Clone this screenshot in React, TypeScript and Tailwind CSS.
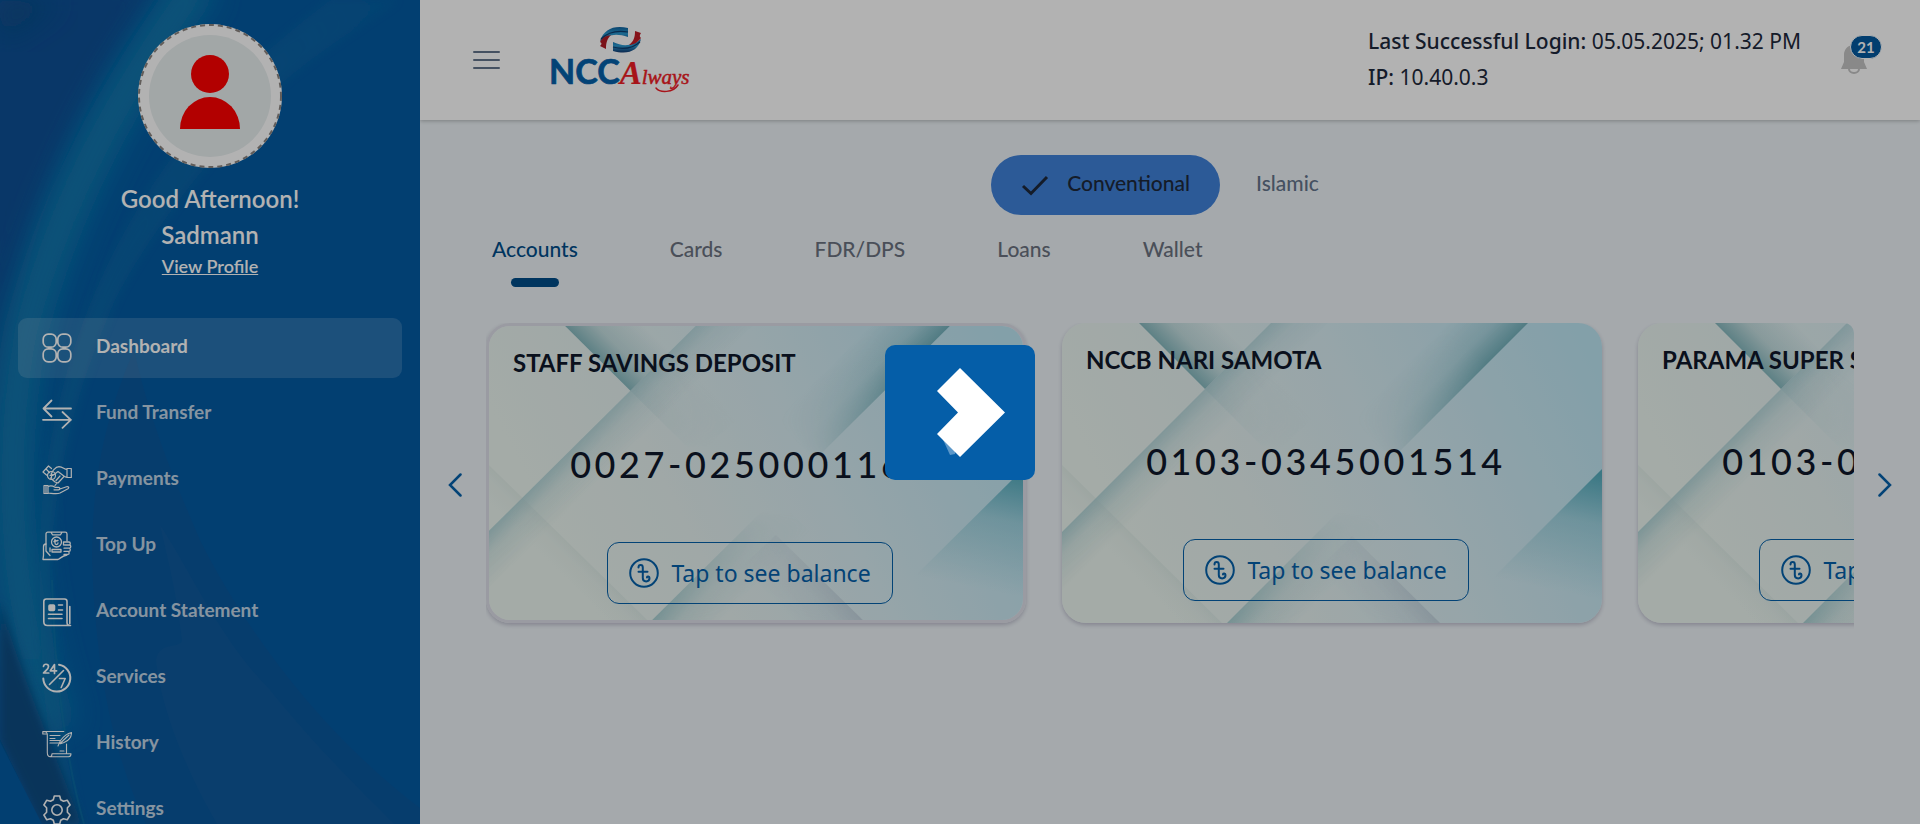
import React from "react";

const menu = [
  { label: "Dashboard", icon: "dashboard", active: true },
  { label: "Fund Transfer", icon: "transfer" },
  { label: "Payments", icon: "payments" },
  { label: "Top Up", icon: "topup" },
  { label: "Account Statement", icon: "statement" },
  { label: "Services", icon: "services" },
  { label: "History", icon: "history" },
  { label: "Settings", icon: "settings" },
];

const accounts = [
  { name: "STAFF SAVINGS DEPOSIT", number: "0027-0250001164", selected: true },
  { name: "NCCB NARI SAMOTA", number: "0103-0345001514" },
  { name: "PARAMA SUPER SAVINGS", number: "0103-0345001523" },
];

const tabs = ["Accounts", "Cards", "FDR/DPS", "Loans", "Wallet"];

const iconShapes: Record<string, React.ReactNode> = {
  dashboard: (
    <g strokeWidth="1.7">
      <rect x="1.2" y="1.2" width="13" height="13" rx="5" />
      <rect x="15.8" y="1.2" width="13" height="13" rx="5" />
      <rect x="1.2" y="15.8" width="13" height="13" rx="5" />
      <rect x="15.8" y="15.8" width="13" height="13" rx="5" />
    </g>
  ),
  transfer: (
    <g strokeWidth="1.8">
      <path d="M29 9.5H1.5M9.5 1.5l-8 8 8 8" />
      <path d="M1 20.8h28M20.5 13l8.3 7.8-8.3 8" />
    </g>
  ),
  payments: (
    <g strokeWidth="1.2">
      <path d="M25 3.5h4.3v9H25zM25 4.5c-3-.3-4-2.6-8-2.8-3 0-4 1.8-6 4l-2 3.500c1.500 1 3.500.5 5-1.200l2-1.500 6.500 5c1 .8 2.500.5 2.500.5" />
      <path d="M22 11.500l-6 6.500-3-1-4.500-4M18 11l-4 4.500M1 7l5.500-6 3 2.500M1 7l3.500 3M4.500 4.500l3 3M15 18l-2 2.500" />
      <circle cx="9.500" cy="10.500" r="4" />
      <path d="M9.500 8.500v4M8 10.500h3" />
      <path d="M2 20.500h4v8H2zM6 21.500c3-1.200 5-.5 7 .8h3.500c1.800 0 1.800 2.500 0 2.500H12M18 24l6.500-2.300c2-.6 3 1 1.500 2l-8 4.300c-3 1.500-7 .5-12 0M4 20.500v8" />
    </g>
  ),
  topup: (
    <g strokeWidth="1.3">
      <path d="M4 13V3c0-1 .8-1.800 1.800-1.800h17.400c1 0 1.800.8 1.800 1.800v7M9 1.200l1.500 2.600h8L20 1.200" />
      <circle cx="14.500" cy="11" r="5" />
      <path d="M13 8.500v3.500c0 2 3 2 3 0M12 10.500l4-1M10 18.500h9v2.500h-9z" />
      <path d="M4 13c-2 0-2.500 1-2.500 3v8c0 2-.5 3-.5 4.500h15c3-1.500 4-3.500 9-4.500M4 13v7l4 4.500M8 20.500V17" />
      <path d="M21.500 11h5.500c1.700 0 1.700 3 0 3h-4.500M27 14h.5c1.700 0 1.700 3.200 0 3.200H22M27 17.200c1.700 0 1.700 3.200 0 3.200h-5M26 20.400c1.500 0 1.500 3 0 3h-4M21.500 11v3" />
    </g>
  ),
  statement: (
    <g strokeWidth="1.6">
      <path d="M28.500 28.500H5.500c-2.200 0-3.700-1.500-3.700-3.700V4.500c0-1.500 1-2.500 2.500-2.500h18.200c1.500 0 2.500 1 2.500 2.500v21c0 2 1.500 3 3.500 3M27.800 9.500v17" />
      <path d="M16.500 8h4M16.500 13h4M6.500 17.300h13.500M6.500 21.500h13.500" />
      <rect x="7" y="8" width="5.500" height="5.500" rx="1" fill="currentColor" />
    </g>
  ),
  services: (
    <g>
      <path strokeWidth="2" d="M17 1.700A13.500 13.500 0 1 1 1.300 15.500" />
      <path strokeWidth="1.600" d="M21.500 7.500L7.500 21.500M17.500 15.500h5.700l-4 9" />
      <path strokeWidth="1.700" d="M1.500 3.500c.3-3 5-3 5 .2 0 2.500-3 4-5 6.300h5.300M12.500 10.500V1.500L8.300 7.800h6.300" />
    </g>
  ),
  history: (
    <g strokeWidth="1.1">
      <path d="M5 5H.8V2.500h21M.8 2.500c3 0 4.500.7 4.500 3v18c0 3 1 4.200 3 4.200h18.200c2 0 2.500-1.500 2.500-3H10c0 2-.8 3-2 3M24.500 15v9.700" />
      <path d="M8 6.500h10M8 9.500h5M8 11.500h10M8 14h9M18 22h4" />
      <path d="M16 17l2.500-5.500C21.500 7.500 25 4.500 29.500 3.500c0 4-2.500 8-7.500 10l-3.500 1.200M18 14.500L27 6" />
    </g>
  ),
  settings: (
    <g strokeWidth="1.6">
      <circle cx="15" cy="15" r="5.200" />
      <path d="M12.300 1h5.400l1 3.700 2.800 1.600 3.700-1.100 2.900 4.800-2.700 2.700v4.600l2.700 2.700-2.900 4.800-3.700-1.100-2.800 1.600-1 3.700h-5.400l-1-3.700-2.800-1.600-3.700 1.100L1.900 20l2.700-2.700v-4.600L1.900 10l2.900-4.800 3.700 1.100 2.800-1.600z" />
    </g>
  ),
};

function MenuIcon({ name }: { name: string }) {
  return (
    <svg viewBox="0 0 30 30" className="size-[30px] shrink-0 text-white" fill="none" stroke="currentColor" strokeLinecap="round" strokeLinejoin="round" aria-hidden="true">
      {iconShapes[name]}
    </svg>
  );
}

function SidebarArt() {
  return (
    <svg className="absolute inset-0 size-full" viewBox="0 0 420 824" preserveAspectRatio="none" aria-hidden="true">
      <defs>
        <filter id="soft" x="-30%" y="-30%" width="160%" height="160%">
          <feGaussianBlur stdDeviation="14" />
        </filter>
        <filter id="mist" x="-30%" y="-30%" width="160%" height="160%">
          <feGaussianBlur stdDeviation="5" />
        </filter>
        <linearGradient id="ray" x1="1" y1="0" x2="0" y2="1">
          <stop offset="0" stopColor="#0c6aa6" stopOpacity="0.5" />
          <stop offset="0.5" stopColor="#0f6ba6" stopOpacity="0.8" />
          <stop offset="1" stopColor="#1173a9" stopOpacity="0.8" />
        </linearGradient>
      </defs>
      <rect width="420" height="824" fill="#045ba3" />
      <path d="M134 350C104 420 92 480 92 560C96 680 116 760 146 824H420V808C330 740 250 640 200 540C170 470 150 420 134 350Z" fill="#0a589d" />
      <path d="M160 525C190 570 220 640 270 690C310 740 350 780 394 824H217C180 760 160 700 156 660C160 640 180 650 182 640C176 590 168 560 160 525Z" fill="#0f5a9c" />
      <path d="M-20 -20H170C110 60 50 160 20 300C0 420 -10 500 -20 560Z" fill="#0d5095" filter="url(#soft)" />
      <path d="M0 0H60L0 40Z" fill="#094e86" filter="url(#soft)" />
      <path d="M200 -20C120 90 60 200 26 330C0 460 10 600 56 730" fill="none" stroke="#1175ac" strokeWidth="44" filter="url(#soft)" />
      <path d="M200 -20C120 90 60 200 26 330C6 440 8 560 34 660" fill="none" stroke="#1278ad" strokeWidth="12" filter="url(#soft)" />
      <path d="M398 0C340 40 290 70 255 110C190 180 140 250 115 300C85 370 60 440 50 560C50 660 64 750 80 824H68C40 720 40 640 40 540C44 440 70 340 110 260C150 180 210 90 330 0Z" fill="url(#ray)" filter="url(#mist)" opacity="0.75" />
      <path d="M0 600C20 670 50 740 82 824H40L0 740Z" fill="#074b81" filter="url(#mist)" />
      <path d="M0 742L42 824H0Z" fill="#045ba3" />
      <path d="M52 580C54 670 66 760 84 824" fill="none" stroke="#1274a4" strokeWidth="2" opacity="0.5" />
    </svg>
  );
}

function CardArt({ id }: { id: string }) {
  const fade = (name: string, x1: number, y1: number, x2: number, y2: number, color: string, from: number) => (
    <linearGradient id={id + name} gradientUnits="userSpaceOnUse" x1={x1} y1={y1} x2={x2} y2={y2}>
      <stop offset="0" stopColor={color} stopOpacity={from} />
      <stop offset="0.4" stopColor={color} stopOpacity={from * 0.35} />
      <stop offset="1" stopColor={color} stopOpacity="0" />
    </linearGradient>
  );
  const url = (name: string) => "url(#" + id + name + ")";
  return (
    <svg className="absolute inset-0 size-full" viewBox="0 0 540 300" preserveAspectRatio="none" aria-hidden="true">
      <defs>
        <linearGradient id={id + "base"} gradientUnits="userSpaceOnUse" x1="60" y1="200" x2="500" y2="-20">
          <stop offset="0" stopColor="#ebf5ef" />
          <stop offset="0.25" stopColor="#e5f1f0" />
          <stop offset="0.55" stopColor="#d7ecf2" />
          <stop offset="1" stopColor="#bce5f3" />
        </linearGradient>
        {fade("a", 104, 104, 134, 134, "#92c2ca", 0.7)}
        {fade("b", 110, 33, 150, -7, "#6fabb3", 0.8)}
        {fade("b2", 160, 83, 200, 43, "#b5d4da", 0.5)}
        {fade("c", 403, 62, 363, 22, "#64a6b0", 0.8)}
        {fade("d", 530, 150, 506, 270, "#4aa6b8", 0.9)}
        {fade("e", 218, 247, 253, 282, "#86bcc3", 0.65)}
        {fade("f", 80, 220, 60, 240, "#b4cdcc", 0.2)}
        {fade("g", 357, 278, 322, 313, "#b9c9d6", 0.7)}
        <linearGradient id={id + "m"} x1="0" y1="1" x2="1" y2="0">
          <stop offset="0.4" stopColor="#000" />
          <stop offset="0.8" stopColor="#fff" />
        </linearGradient>
        <linearGradient id={id + "n"} x1="0" y1="0" x2="0" y2="1">
          <stop offset="0" stopColor="#000" />
          <stop offset="1" stopColor="#fff" />
        </linearGradient>
        <linearGradient id={id + "p"} x1="0" y1="0" x2="0" y2="1">
          <stop offset="0" stopColor="#fff" />
          <stop offset="1" stopColor="#000" />
        </linearGradient>
        <mask id={id + "mask"}>
          <rect x="240" width="240" height="240" fill={url("m")} />
        </mask>
        <mask id={id + "rise"}>
          <rect x="100" y="190" width="340" height="110" fill={url("n")} />
        </mask>
        <mask id={id + "fall"}>
          <rect x="100" y="40" width="260" height="85" fill={url("p")} />
        </mask>
        <mask id={id + "edge"}>
          <rect width="320" height="300" fill={url("n")} />
          <rect width="320" height="300" fill="#fff" opacity="0.7" />
        </mask>
      </defs>
      <rect width="540" height="300" fill={url("base")} />
      <path d="M77 0L143 66L209 0Z" fill={url("b")} />
      <path d="M143 66L210 133L300 50L209 0Z" fill={url("b2")} mask={url("fall")} />
      <path d="M0 209L209 0H420L120 300H0Z" fill={url("a")} mask={url("edge")} />
      <path d="M466 0L270 196L230 156L386 0Z" fill={url("c")} mask={url("mask")} />
      <path d="M165 300L290 175L415 300Z" fill={url("e")} mask={url("rise")} />
      <path d="M0 142L160 300H0Z" fill={url("f")} />
      <path d="M290 213L378 300H200Z" fill={url("g")} mask={url("rise")} />
      <path d="M540 146L386 300H540Z" fill={url("d")} />
    </svg>
  );
}

function AccountCard({ name, number, selected, id }: { name: string; number: string; selected?: boolean; id: string }) {
  return (
    <article
      className={
        "relative isolate flex h-[300px] w-[540px] shrink-0 flex-col overflow-hidden rounded-[24px] pr-9 pl-6 shadow-[0_2px_4px_rgba(80,70,110,0.3)] " +
        (selected ? "border-[3px] border-[#dddfe8]" : "")
      }
    >
      <div className="absolute inset-0 -z-10">
        <CardArt id={id} />
      </div>
      <h2 className="mt-[19px] text-[24px] leading-[36px] font-bold whitespace-nowrap text-[#0f172a]">{name}</h2>
      <p className="mt-[56px] text-center text-[36px] leading-[54px] font-medium tracking-widest whitespace-nowrap text-[#0f172a]">{number}</p>
      <button
        type="button"
        className="mt-[51px] flex h-[62px] w-[286px] shrink-0 items-center justify-center gap-3 self-center rounded-xl border border-[#0560aa] font-['Noto_Sans',sans-serif] text-[23px] whitespace-nowrap text-[#0560aa]"
      >
        <svg viewBox="0 0 30 30" className="size-[30px] shrink-0" fill="none" stroke="currentColor" strokeWidth="2" strokeLinecap="round" aria-hidden="true">
          <circle cx="15" cy="15" r="13.800" />
          <path d="M9.500 9.500c0-3.200 4.300-3.200 4.300 0V20c0 4.500 6.700 4.500 6.700 0 0-2-2.500-2-2.500-.5M9.500 13.700h9" />
        </svg>
        Tap to see balance
      </button>
    </article>
  );
}

function Logo() {
  return (
    <svg viewBox="-4 0 148 66" className="h-[66px] w-[148px]" role="img" aria-label="NCC Always">
      <defs>
        <linearGradient id="wave" x1="0" y1="0" x2="0" y2="1">
          <stop offset="0" stopColor="#0f63a0" />
          <stop offset="0.5" stopColor="#2a9ad0" />
          <stop offset="1" stopColor="#123a72" />
        </linearGradient>
      </defs>
      <path d="M48 14C52 2 62 -2 76 1V10C65 6 56 7 48 14Z" fill="url(#wave)" />
      <path d="M49 12C56 5 64 3 76 5" fill="none" stroke="#0d3d6e" strokeWidth="1.200" />
      <path d="M48 15C51 10 54 9 59 8C55 12 54 16 54 22L48 19C50 17 50 16 48 15Z" fill="#b01c26" />
      <path d="M89 12C86 24 76 28 61 24V15C71 20 81 19 89 12Z" fill="url(#wave)" />
      <path d="M88 15C80 22 72 23 61 20" fill="none" stroke="#0d3d6e" strokeWidth="1.200" />
      <path d="M83 4L89 6C87 9 88 10 89 11C85 16 81 18 77 18C82 14 83 10 83 4Z" fill="#c01c26" />
      <text x="-3" y="57" fontFamily="Lato, sans-serif" fontWeight="700" fontSize="34" fill="#0560aa" stroke="#0560aa" strokeWidth="0.700">
        NCC
        <tspan fontFamily="Liberation Serif, serif" fontStyle="italic" fontSize="33" fill="#f01d26" stroke="#f01d26" strokeWidth="0.200">A</tspan>
        <tspan fontFamily="Liberation Serif, serif" fontStyle="italic" fontWeight="400" fontSize="21" fill="#f01d26" stroke="#f01d26" strokeWidth="0.500">lways</tspan>
      </text>
      <path d="M104 61C108 66 121 66 126 58" fill="none" stroke="#f01d26" strokeWidth="1.500" strokeLinecap="round" />
    </svg>
  );
}

export default function App() {
  return (
    <div className="flex h-screen min-h-[600px] overflow-hidden bg-[#edf3f7] font-['Lato',sans-serif]">
      <aside className="relative isolate flex w-[420px] shrink-0 flex-col overflow-hidden">
        <div className="absolute inset-0 -z-10">
          <SidebarArt />
        </div>
        <div className="flex flex-col items-center pt-6 text-white">
          <svg viewBox="0 0 144 144" className="size-36" role="img" aria-label="Profile picture">
            <circle cx="72" cy="72" r="72" fill="#fff" />
            <circle cx="72" cy="72" r="71" fill="none" stroke="#8d8682" strokeWidth="2" strokeDasharray="5 4" />
            <circle cx="72" cy="72" r="61" fill="#e9eff0" />
            <circle cx="72" cy="50" r="19" fill="#ff0000" />
            <path d="M42 105a30 32 0 0 1 60 0z" fill="#ff0000" />
          </svg>
          <p className="mt-[13px] text-[24px] leading-[36px] font-semibold">Good Afternoon!</p>
          <p className="text-[24px] leading-[36px] font-semibold">Sadmann</p>
          <a href="#profile" className="text-[18px] leading-[27px] font-semibold underline">View Profile</a>
        </div>
        <nav className="mt-[38px] flex flex-col gap-[6px] px-[18px]">
          {menu.map((item) => (
            <a
              key={item.label}
              href={"#" + item.icon}
              className={
                "flex h-[60px] shrink-0 items-center gap-6 rounded-[9px] px-6 text-[19px] font-bold " +
                (item.active ? "bg-white/15 text-white" : "text-white/75")
              }
            >
              <MenuIcon name={item.icon} />
              <span className="pb-1">{item.label}</span>
            </a>
          ))}
        </nav>
      </aside>

      <main className="flex min-w-0 flex-1 flex-col">
        <header className="flex h-[120px] shrink-0 items-center bg-white pr-[38px] pl-[53px] shadow-[0_1px_4px_rgba(0,0,0,0.25)]">
          <button type="button" aria-label="Toggle menu" className="flex w-[27px] flex-col gap-[6px]">
            <span className="h-[2px] rounded bg-[#64748b]" />
            <span className="h-[2px] rounded bg-[#64748b]" />
            <span className="h-[2px] rounded bg-[#64748b]" />
          </button>
          <div className="ml-12">
            <Logo />
          </div>
          <div className="ml-auto pb-[2px] font-['Noto_Sans',sans-serif] text-[21px] leading-[36px] text-[#1e293b]">
            <p>
              <span className="font-medium">Last Successful Login:</span> 05.05.2025; 01.32 PM
            </p>
            <p>
              <span className="font-medium">IP:</span> 10.40.0.3
            </p>
          </div>
          <button type="button" aria-label="Notifications" className="relative ml-[40px] h-[48px] w-[41px]">
            <svg viewBox="0 0 26 30" className="absolute top-2 left-0 h-[30px] w-[26px]" aria-hidden="true">
              <path d="M13 1c-6 0-10 4-10 10v7l-3 7h26l-3-7v-7c0-6-4-10-10-10z" fill="#c4c4c4" />
              <path d="M8 25a5 4 0 0 0 10 0" fill="none" stroke="#c4c4c4" strokeWidth="2" />
            </svg>
            <span className="absolute -top-px right-0 flex h-6 w-8 items-center justify-center rounded-full border border-white bg-[#04599f] text-[15px] font-bold text-white">21</span>
          </button>
        </header>

        <div className="mt-[35px] flex justify-center gap-[6px] text-[21px] font-medium">
          <button type="button" className="flex h-[60px] items-center gap-[18px] rounded-full bg-[#4081d9] px-[30px] text-[#1e293b]">
            <svg viewBox="0 0 28 24" className="h-6 w-7" fill="none" stroke="currentColor" strokeWidth="3" aria-hidden="true">
              <path d="M2 13l8 7.500L26 4" />
            </svg>
            <span className="pb-1">Conventional</span>
          </button>
          <button type="button" className="h-[60px] px-[30px] pb-1 text-[#64748b]">Islamic</button>
        </div>

        <div className="mt-[19px] flex gap-[92px] pl-[72px] text-[21px] leading-[30px] font-medium" role="tablist">
          {tabs.map((tab, i) => (
            <button
              key={tab}
              type="button"
              role="tab"
              aria-selected={i === 0}
              className={"flex flex-col items-center gap-[14px] " + (i === 0 ? "text-[#004d89]" : "text-[#6b7280]")}
            >
              {tab}
              <span className={"h-[9px] w-12 rounded-[5px] " + (i === 0 ? "bg-[#004d89]" : "")} />
            </button>
          ))}
        </div>

        <section className="mt-9 flex px-1" aria-label="Accounts">
          <button type="button" aria-label="Previous" className="flex w-[62px] shrink-0 items-center justify-center text-[#0560aa]">
            <svg viewBox="0 0 14 24" className="h-6 w-[14px]" fill="none" stroke="currentColor" strokeWidth="2.500" strokeLinecap="round" aria-hidden="true">
              <path d="M12.500 1.500L2 12l10.500 10.500" />
            </svg>
          </button>
          <div className="flex min-w-0 flex-1 gap-9 overflow-hidden rounded-[10px] pb-6">
            {accounts.map((account, i) => (
              <AccountCard key={account.number} id={"card" + i} {...account} />
            ))}
          </div>
          <button type="button" aria-label="Next" className="flex w-[62px] shrink-0 items-center justify-center text-[#0560aa]">
            <svg viewBox="0 0 14 24" className="h-6 w-[14px]" fill="none" stroke="currentColor" strokeWidth="2.500" strokeLinecap="round" aria-hidden="true">
              <path d="M1.500 1.500L12 12 1.500 22.500" />
            </svg>
          </button>
        </section>
      </main>

      <div className="fixed inset-0 z-50 flex items-center justify-center bg-black/30" role="status" aria-label="Loading">
        <div className="flex h-[135px] w-[150px] items-center justify-center rounded-[10px] bg-[#055ea8]">
          <svg viewBox="0 0 150 135" className="size-full" aria-hidden="true">
            <path d="M55 88L65 110L70 109L72 94Z" fill="#5b97c9" />
            <path d="M75 23L120 67.500L75 112L52 89L73 67.500L52 46Z" fill="#fff" />
          </svg>
        </div>
      </div>
    </div>
  );
}
